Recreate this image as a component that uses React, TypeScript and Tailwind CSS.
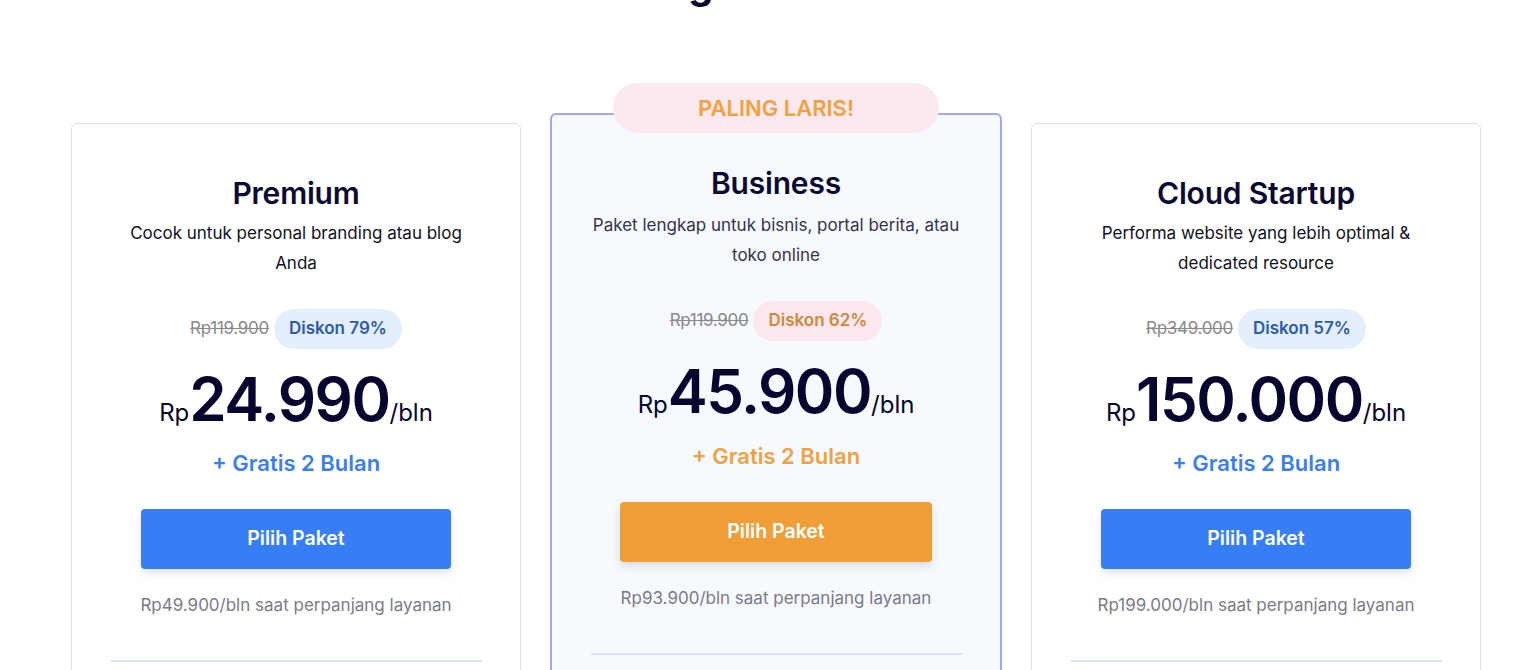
import React from "react";

type Plan = {
  name: string;
  description: string[];
  oldPrice: string;
  discount: string;
  price: string;
  renewal: string;
  featured?: boolean;
};

const plans: Plan[] = [
  {
    name: "Premium",
    description: ["Cocok untuk personal branding atau blog", "Anda"],
    oldPrice: "Rp119.900",
    discount: "Diskon 79%",
    price: "24.990",
    renewal: "Rp49.900/bln saat perpanjang layanan",
  },
  {
    name: "Business",
    description: ["Paket lengkap untuk bisnis, portal berita, atau", "toko online"],
    oldPrice: "Rp119.900",
    discount: "Diskon 62%",
    price: "45.900",
    renewal: "Rp93.900/bln saat perpanjang layanan",
    featured: true,
  },
  {
    name: "Cloud Startup",
    description: ["Performa website yang lebih optimal &", "dedicated resource"],
    oldPrice: "Rp349.000",
    discount: "Diskon 57%",
    price: "150.000",
    renewal: "Rp199.000/bln saat perpanjang layanan",
  },
];

const PlanCard = ({ plan }: { plan: Plan }) => {
  const featured = plan.featured;
  return (
    <div
      className={
        featured
          ? "relative w-[452px] h-[620px] rounded-md border-2 border-[#a3a6f7] bg-[#f6f9fe] flex flex-col items-center pt-[50px]"
          : "relative w-[450px] h-[620px] rounded-md border border-[#dbe3f6] bg-white flex flex-col items-center pt-[51px]"
      }
    >
      {featured && (
        <div className="absolute -top-[32px] left-1/2 -translate-x-1/2 w-[326px] h-[50px] rounded-full bg-[#fce8ef] flex items-center justify-center text-[22px] font-semibold text-[#f1a13e]">
          PALING LARIS!
        </div>
      )}

      <h3 className="text-[30px] leading-[36px] font-semibold text-[#0a0a35] tracking-[-0.2px]">
        {plan.name}
      </h3>
      <p
        className={
          featured
            ? "mt-[9px] text-center text-[17px] leading-[30px] text-[#34344a]"
            : "mt-[7px] text-center text-[17px] leading-[30px] text-[#111122]"
        }
      >
        {plan.description.map((line, i) => (
          <span key={i} className="block whitespace-nowrap">
            {line}
          </span>
        ))}
      </p>

      <div className="mt-[31px] flex items-center gap-[5px]">
        <span className="text-[17px] text-[#8a8a8a] line-through tracking-[-0.3px]">
          {plan.oldPrice}
        </span>
        <span
          className={
            featured
              ? "h-[40px] px-[15px] rounded-full bg-[#fde7ee] text-[#cd8a3c] text-[17px] font-semibold flex items-center"
              : "h-[40px] px-[15px] rounded-full bg-[#e4eefc] text-[#2b5cae] text-[17px] font-semibold flex items-center"
          }
        >
          {plan.discount}
        </span>
      </div>

      <div className="mt-[18px] h-[64px] flex items-baseline text-[#050530]">
        <span className="text-[24px] font-normal">Rp</span>
        <span className="text-[60px] leading-[64px] font-semibold tracking-[-1.5px]">
          {plan.price}
        </span>
        <span className="text-[24px] font-normal">/bln</span>
      </div>

      <div
        className={
          featured
            ? "mt-[18px] text-[22px] leading-[30px] font-semibold text-[#f1a13e]"
            : "mt-[17px] text-[22px] leading-[30px] font-semibold text-[#3b7ef2]"
        }
      >
        + Gratis 2 Bulan
      </div>

      <button
        className={
          featured
            ? "mt-[31px] w-[312px] h-[60px] rounded-[4px] bg-[#f09e37] text-white text-[19.5px] font-semibold shadow-[0_4px_10px_rgba(0,0,0,0.12)]"
            : "mt-[31px] w-[310px] h-[60px] rounded-[4px] bg-[#377ef4] text-white text-[19.5px] font-semibold shadow-[0_4px_10px_rgba(0,0,0,0.12)]"
        }
      >
        Pilih Paket
      </button>

      <p className="mt-[24px] text-[17px] leading-[24px] text-[#7b7b88]">
        {plan.renewal}
      </p>

      <div className="mt-[43px] w-[371px] h-[2px] bg-[#dbe3f8]" />
    </div>
  );
};

export default function App() {
  return (
    <div
      className="min-h-screen bg-white overflow-hidden"
      style={{ fontFamily: "Inter, 'Noto Sans', sans-serif" }}
    >
      <h2 className="-mt-[40px] h-[48px] text-center text-[40px] leading-[48px] font-bold text-[#050530] pl-[8px]">
        Hosting Terbaik Anda
      </h2>

      <div className="mt-[75px] ml-[71px] flex items-start gap-[29px]">
        <div className="mt-[40px]">
          <PlanCard plan={plans[0]} />
        </div>
        <div className="mt-[30px]">
          <PlanCard plan={plans[1]} />
        </div>
        <div className="mt-[40px]">
          <PlanCard plan={plans[2]} />
        </div>
      </div>
    </div>
  );
}
